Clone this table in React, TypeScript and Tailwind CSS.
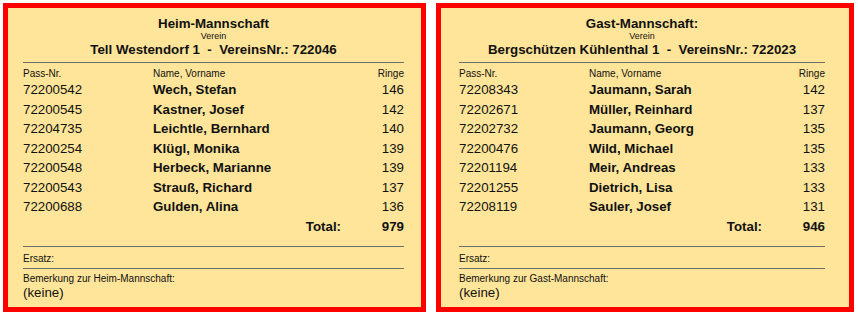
type Player = { pass: string; name: string; ringe: number }

const heim: Player[] = [
  { pass: "72200542", name: "Wech, Stefan", ringe: 146 },
  { pass: "72200545", name: "Kastner, Josef", ringe: 142 },
  { pass: "72204735", name: "Leichtle, Bernhard", ringe: 140 },
  { pass: "72200254", name: "Klügl, Monika", ringe: 139 },
  { pass: "72200548", name: "Herbeck, Marianne", ringe: 139 },
  { pass: "72200543", name: "Strauß, Richard", ringe: 137 },
  { pass: "72200688", name: "Gulden, Alina", ringe: 136 },
]

const gast: Player[] = [
  { pass: "72208343", name: "Jaumann, Sarah", ringe: 142 },
  { pass: "72202671", name: "Müller, Reinhard", ringe: 137 },
  { pass: "72202732", name: "Jaumann, Georg", ringe: 135 },
  { pass: "72200476", name: "Wild, Michael", ringe: 135 },
  { pass: "72201194", name: "Meir, Andreas", ringe: 133 },
  { pass: "72201255", name: "Dietrich, Lisa", ringe: 133 },
  { pass: "72208119", name: "Sauler, Josef", ringe: 131 },
]

function TeamCard({
  title,
  verein,
  vereinsNr,
  players,
  bemerkung,
  outer,
  inner,
}: {
  title: string
  verein: string
  vereinsNr: string
  players: Player[]
  bemerkung: string
  outer: string
  inner: string
}) {
  const total = players.reduce((s, p) => s + p.ringe, 0)
  return (
    <div className={`h-[309px] shrink-0 border-[5px] border-[#ff0000] bg-[#ffe599] pt-[8px] ${outer}`}>
      <div className={inner}>
        <div className="text-center text-[13.3px] font-bold leading-[15px]">{title}</div>
        <div className="text-center text-[9px] leading-[10px]">Verein</div>
        <div className="mt-[1px] text-center text-[13.3px] font-bold leading-[15px]">
          {verein}&nbsp; -&nbsp; VereinsNr.: {vereinsNr}
        </div>
        <div className="mt-[5px] h-px bg-[#6e6e6e]" />
        <div className="mt-[5px] grid grid-cols-[130px_1fr_63px] text-[10px] leading-[12px]">
          <div>Pass-Nr.</div>
          <div>Name, Vorname</div>
          <div className="text-right">Ringe</div>
        </div>
        {players.map((p) => (
          <div key={p.pass} className="grid h-[19.5px] grid-cols-[130px_1fr_63px] items-center text-[13.3px] leading-[15px]">
            <div>{p.pass}</div>
            <div className="font-bold">{p.name}</div>
            <div className="text-right">{p.ringe}</div>
          </div>
        ))}
        <div className="grid h-[19.5px] grid-cols-[130px_1fr_63px] items-center text-[13.3px] font-bold leading-[15px]">
          <div />
          <div className="text-right">Total:</div>
          <div className="text-right">{total}</div>
        </div>
        <div className="mt-[9.5px] h-px bg-[#6e6e6e]" />
        <div className="mt-[6px] text-[10px] leading-[12px]">Ersatz:</div>
        <div className="mt-[3px] h-px bg-[#6e6e6e]" />
        <div className="mt-[4px] text-[10px] leading-[12px]">{bemerkung}</div>
        <div className="text-[13.3px] leading-[15px]">(keine)</div>
      </div>
    </div>
  )
}

export default function App() {
  return (
    <div className="flex h-[316px] w-[858px] gap-[10px] bg-white pl-[3px] pt-[3px] font-['Liberation_Sans',Arial,sans-serif] text-[#111]">
      <TeamCard
        title="Heim-Mannschaft"
        verein="Tell Westendorf 1"
        vereinsNr="722046"
        players={heim}
        bemerkung="Bemerkung zur Heim-Mannschaft:"
        outer="w-[423px] pl-[15px]"
        inner="w-[381px]"
      />
      <TeamCard
        title="Gast-Mannschaft:"
        verein="Bergschützen Kühlenthal 1"
        vereinsNr="722023"
        players={gast}
        bemerkung="Bemerkung zur Gast-Mannschaft:"
        outer="w-[418px] pl-[18px]"
        inner="w-[366px]"
      />
    </div>
  )
}
